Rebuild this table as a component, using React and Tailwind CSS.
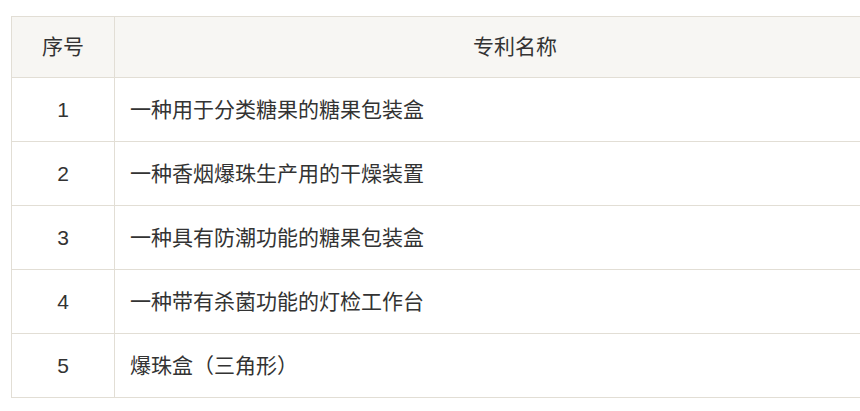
export default function App() {
  const rows = [
    ["1", "一种用于分类糖果的糖果包装盒"],
    ["2", "一种香烟爆珠生产用的干燥装置"],
    ["3", "一种具有防潮功能的糖果包装盒"],
    ["4", "一种带有杀菌功能的灯检工作台"],
    ["5", "爆珠盒（三角形）"],
  ];
  const font = { fontFamily: '"Liberation Sans", "Noto Sans CJK SC", sans-serif' };
  return (
    <div className="w-[860px] h-[411px] overflow-hidden bg-white pl-[11px] pt-[16px]" style={font}>
      <div className="w-[905px] border-l border-t border-[#e2ded5] text-[21px] text-[#333333]">
        <div className="grid grid-cols-[103px_1fr] h-[61px] bg-[#f7f6f3]">
          <div className="flex items-center justify-center border-r border-b border-[#e2ded5]">序号</div>
          <div className="flex items-center justify-center border-r border-b border-[#e2ded5]">专利名称</div>
        </div>
        {rows.map(([n, t]) => (
          <div key={n} className="grid grid-cols-[103px_1fr] h-[64px]">
            <div className="flex items-center justify-center border-r border-b border-[#e2ded5]">{n}</div>
            <div className="flex items-center pl-[15px] border-r border-b border-[#e2ded5]">{t}</div>
          </div>
        ))}
      </div>
    </div>
  );
}
